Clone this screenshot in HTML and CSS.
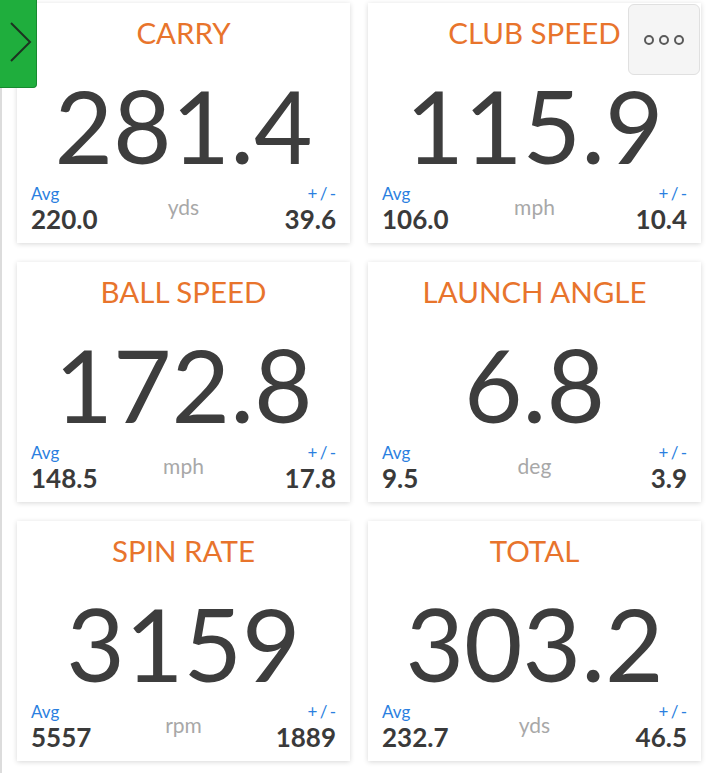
FILE: index.html
```html
<!DOCTYPE html>
<html lang="en">
<head>
    <meta charset="UTF-8">
    <meta name="viewport" content="width=device-width, initial-scale=1.0">
    <title>Shot Stats</title>
    <link rel="stylesheet" href="styles.css">
</head>
<body>
    <div class="side-tab">
        <svg width="37" height="88" viewBox="0 0 37 88">
            <polyline points="11,23 30,42 11,61" fill="none" stroke="#1c3320" stroke-width="2"/>
        </svg>
    </div>

    <button class="more-btn" aria-label="More">
        <svg width="44" height="14" viewBox="0 0 44 14">
            <circle cx="7" cy="7" r="4" fill="none" stroke="#5a5a5a" stroke-width="2"/>
            <circle cx="22" cy="7" r="4" fill="none" stroke="#5a5a5a" stroke-width="2"/>
            <circle cx="37" cy="7" r="4" fill="none" stroke="#5a5a5a" stroke-width="2"/>
        </svg>
    </button>

    <div class="stats-grid">
        <div class="stat-card">
            <div class="stat-title">CARRY</div>
            <div class="stat-value">281.4</div>
            <div class="stat-footer">
                <div class="stat-left"><span class="stat-label">Avg</span><span class="stat-num">220.0</span></div>
                <div class="stat-unit">yds</div>
                <div class="stat-right"><span class="stat-label">+ / -</span><span class="stat-num">39.6</span></div>
            </div>
        </div>
        <div class="stat-card">
            <div class="stat-title">CLUB SPEED</div>
            <div class="stat-value">115.9</div>
            <div class="stat-footer">
                <div class="stat-left"><span class="stat-label">Avg</span><span class="stat-num">106.0</span></div>
                <div class="stat-unit">mph</div>
                <div class="stat-right"><span class="stat-label">+ / -</span><span class="stat-num">10.4</span></div>
            </div>
        </div>
        <div class="stat-card">
            <div class="stat-title">BALL SPEED</div>
            <div class="stat-value">172.8</div>
            <div class="stat-footer">
                <div class="stat-left"><span class="stat-label">Avg</span><span class="stat-num">148.5</span></div>
                <div class="stat-unit">mph</div>
                <div class="stat-right"><span class="stat-label">+ / -</span><span class="stat-num">17.8</span></div>
            </div>
        </div>
        <div class="stat-card">
            <div class="stat-title">LAUNCH ANGLE</div>
            <div class="stat-value">6.8</div>
            <div class="stat-footer">
                <div class="stat-left"><span class="stat-label">Avg</span><span class="stat-num">9.5</span></div>
                <div class="stat-unit">deg</div>
                <div class="stat-right"><span class="stat-label">+ / -</span><span class="stat-num">3.9</span></div>
            </div>
        </div>
        <div class="stat-card">
            <div class="stat-title">SPIN RATE</div>
            <div class="stat-value">3159</div>
            <div class="stat-footer">
                <div class="stat-left"><span class="stat-label">Avg</span><span class="stat-num">5557</span></div>
                <div class="stat-unit">rpm</div>
                <div class="stat-right"><span class="stat-label">+ / -</span><span class="stat-num">1889</span></div>
            </div>
        </div>
        <div class="stat-card">
            <div class="stat-title">TOTAL</div>
            <div class="stat-value">303.2</div>
            <div class="stat-footer">
                <div class="stat-left"><span class="stat-label">Avg</span><span class="stat-num">232.7</span></div>
                <div class="stat-unit">yds</div>
                <div class="stat-right"><span class="stat-label">+ / -</span><span class="stat-num">46.5</span></div>
            </div>
        </div>
    </div>
</body>
</html>
```

FILE: styles.css
```css
body {
    margin: 0;
    font-family: 'Lato', 'Noto Sans', sans-serif;
    background: #ffffff;
    color: #3d3d3d;
    border-left: 2px solid #dcdcdc;
    min-height: 773px;
    box-sizing: border-box;
}

.side-tab {
    position: absolute;
    top: 0;
    left: 0;
    width: 37px;
    height: 88px;
    background: #1fae3d;
    border: 1px solid #178a30;
    border-top: none;
    border-left: none;
    border-radius: 0 0 4px 0;
    box-sizing: border-box;
    z-index: 2;
}

.side-tab svg {
    display: block;
}

.more-btn {
    position: absolute;
    top: 4px;
    left: 628px;
    width: 72px;
    height: 71px;
    background: #f5f5f5;
    border: 1px solid #e0e0e0;
    border-radius: 6px;
    padding: 0;
    display: flex;
    align-items: center;
    justify-content: center;
    z-index: 2;
}

.stats-grid {
    display: grid;
    grid-template-columns: 333px 333px;
    grid-auto-rows: 240px;
    column-gap: 18px;
    row-gap: 19px;
    padding: 3px 0 0 15px;
}

.stat-card {
    background: #ffffff;
    box-shadow: 0 1px 5px rgba(0, 0, 0, 0.16);
    display: flex;
    flex-direction: column;
    padding: 15px 14px 11px;
    box-sizing: border-box;
}

.stat-title {
    font-size: 29.5px;
    line-height: 30px;
    color: #e8742c;
    text-align: center;
}

.stat-value {
    font-size: 101px;
    line-height: 101px;
    text-align: center;
    margin-top: 27px;
    color: #3d3d3d;
}

.stat-footer {
    margin-top: auto;
    display: grid;
    grid-template-columns: 1fr auto 1fr;
    align-items: start;
}

.stat-left,
.stat-right {
    display: flex;
    flex-direction: column;
}

.stat-right {
    align-items: flex-end;
}

.stat-label {
    font-size: 17px;
    line-height: 17px;
    color: #2b7fe0;
    margin-bottom: 4px;
}

.stat-right .stat-label {
    word-spacing: -2px;
}

.stat-num {
    font-size: 26px;
    line-height: 26px;
    font-weight: 700;
    color: #3a3a3a;
}

.stat-unit {
    font-size: 21px;
    line-height: 21px;
    color: #a8a8a8;
    padding-top: 11px;
}
```
